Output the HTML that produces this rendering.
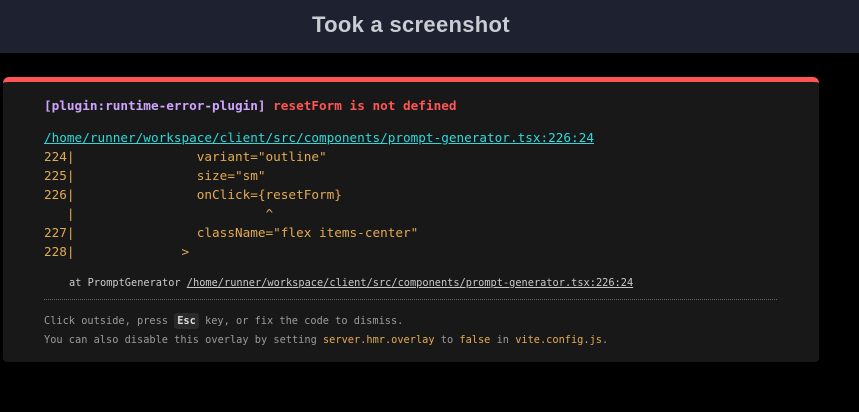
<!DOCTYPE html>
<html><head><style>
body{margin:0;width:859px;height:412px;background:#000;overflow:hidden;position:relative;font-family:"DejaVu Sans Mono","Liberation Mono",monospace}
.hd{position:absolute;left:0;top:0;width:859px;height:53px;background:#1e2230;color:#c9ccd3;font:bold 22px "Liberation Sans",sans-serif;line-height:50px}
.hd span{position:absolute;left:312px;letter-spacing:0.3px}
.pn{position:absolute;left:3px;top:77px;width:816px;height:285px;background:#181818;border-top:5px solid #ff5555;border-radius:6px 6px 4px 4px;box-sizing:border-box}
.m{position:absolute;left:41px;font-size:12.7px;white-space:pre;line-height:19px}
.y{color:#e2aa53}
.s{position:absolute;left:41px;font-size:10.3px;white-space:pre;color:#c9c9c9}
.f{color:#9a9a9a}
</style></head><body>
<div class="hd"><span>Took a screenshot</span></div>
<div class="pn">
<div class="m" style="top:14px;font-weight:bold"><span style="color:#cfa4ff">[plugin:runtime-error-plugin]</span> <span style="color:#ff5555">resetForm is not defined</span></div>
<div class="m" style="top:46px;color:#2dd9da;text-decoration:underline">/home/runner/workspace/client/src/components/prompt-generator.tsx:226:24</div>
<div class="m y" style="top:65px">224|                variant="outline"
225|                size="sm"
226|                onClick={resetForm}
   |                         ^
227|                className="flex items-center"
228|              &gt;</div>
<div class="s" style="top:195px;left:66px">at PromptGenerator <span style="text-decoration:underline">/home/runner/workspace/client/src/components/prompt-generator.tsx:226:24</span></div>
<div style="position:absolute;left:41px;top:217px;width:733px;border-top:1px dotted #666"></div>
<div class="s f" style="top:233px">Click outside, press <span style="background:#2a2a2a;color:#ddd;font-weight:bold;padding:2px 3px;border-radius:3px">Esc</span> key, or fix the code to dismiss.</div>
<div class="s f" style="top:252px">You can also disable this overlay by setting <span class="y">server.hmr.overlay</span> to <span class="y">false</span> in <span class="y">vite.config.js</span>.</div>
</div>
</body></html>
